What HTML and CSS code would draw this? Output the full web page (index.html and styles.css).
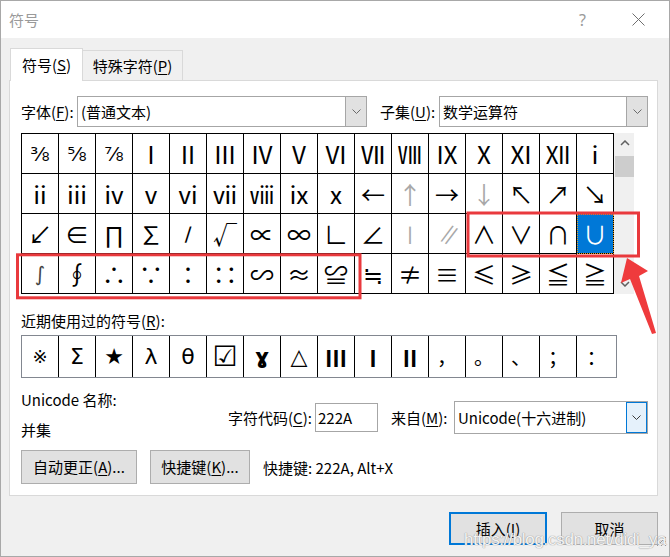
FILE: index.html
```html
<!DOCTYPE html>
<html lang="zh-CN">
<head>
<meta charset="utf-8">
<title>符号</title>
<link rel="stylesheet" href="styles.css">
</head>
<body>
<div class="window">
  <div class="titlebar">
    <span class="title">符号</span>
    <span class="help">?</span>
    <svg class="close" width="13" height="13" viewBox="0 0 13 13"><path d="M0.5 0.5 L12.5 12.5 M12.5 0.5 L0.5 12.5" stroke="#6f6f6f" stroke-width="1" fill="none"/></svg>
  </div>
  <div class="body">
    <div class="tabs">
      <div class="tab active">符号(<u>S</u>)</div>
      <div class="tab">特殊字符(<u>P</u>)</div>
    </div>
    <div class="panel">
      <div class="font-row">
        <span class="lbl lbl-font">字体(<u>F</u>):</span>
        <div class="select sel-font"><span class="sel-text">(普通文本)</span><span class="sel-btn"><svg width="9" height="5" viewBox="0 0 9 5"><path d="M0.5 0.5 L4.5 4.5 L8.5 0.5" stroke="#6a6a6a" fill="none"/></svg></span></div>
        <span class="lbl lbl-subset">子集(<u>U</u>):</span>
        <div class="select sel-subset"><span class="sel-text">数学运算符</span><span class="sel-btn"><svg width="9" height="5" viewBox="0 0 9 5"><path d="M0.5 0.5 L4.5 4.5 L8.5 0.5" stroke="#6a6a6a" fill="none"/></svg></span></div>
      </div>
      <div class="grid-wrap">
        <div class="grid">
          <div class="cell frac">⅜</div><div class="cell frac">⅝</div><div class="cell frac">⅞</div><div class="cell">Ⅰ</div><div class="cell">Ⅱ</div><div class="cell">Ⅲ</div><div class="cell">Ⅳ</div><div class="cell">Ⅴ</div><div class="cell">Ⅵ</div><div class="cell">Ⅶ</div><div class="cell">Ⅷ</div><div class="cell">Ⅸ</div><div class="cell">Ⅹ</div><div class="cell">Ⅺ</div><div class="cell">Ⅻ</div><div class="cell">ⅰ</div>
          <div class="cell">ⅱ</div><div class="cell">ⅲ</div><div class="cell">ⅳ</div><div class="cell">ⅴ</div><div class="cell">ⅵ</div><div class="cell">ⅶ</div><div class="cell">ⅷ</div><div class="cell">ⅸ</div><div class="cell">ⅹ</div><div class="cell">←</div><div class="cell light">↑</div><div class="cell">→</div><div class="cell light">↓</div><div class="cell">↖</div><div class="cell">↗</div><div class="cell">↘</div>
          <div class="cell">↙</div><div class="cell">∈</div><div class="cell">∏</div><div class="cell">∑</div><div class="cell small">∕</div><div class="cell">√</div><div class="cell">∝</div><div class="cell">∞</div><div class="cell">∟</div><div class="cell">∠</div><div class="cell light">∣</div><div class="cell light skew">∥</div><div class="cell">∧</div><div class="cell">∨</div><div class="cell">∩</div><div class="cell selected">∪</div>
          <div class="cell thin">∫</div><div class="cell">∮</div><div class="cell">∴</div><div class="cell">∵</div><div class="cell">∶</div><div class="cell">∷</div><div class="cell">∽</div><div class="cell">≈</div><div class="cell">≌</div><div class="cell">≒</div><div class="cell">≠</div><div class="cell">≡</div><div class="cell">≤</div><div class="cell">≥</div><div class="cell">≦</div><div class="cell">≧</div>
        </div>
        <div class="scrollbar">
          <div class="sb-btn"><svg width="10" height="6" viewBox="0 0 10 6"><path d="M1 5 L5 1 L9 5" stroke="#606060" stroke-width="1.5" fill="none"/></svg></div>
          <div class="sb-thumb"></div>
          <div class="sb-track"></div>
          <div class="sb-btn"><svg width="10" height="6" viewBox="0 0 10 6"><path d="M1 1 L5 5 L9 1" stroke="#606060" stroke-width="1.5" fill="none"/></svg></div>
        </div>
      </div>
      <div class="recent-label">近期使用过的符号(<u>R</u>):</div>
      <div class="recent">
        <div class="rcell thinref">※</div><div class="rcell">Σ</div><div class="rcell">★</div><div class="rcell">λ</div><div class="rcell">θ</div><div class="rcell check">☑</div><div class="rcell bold">ɣ</div><div class="rcell">△</div><div class="rcell roman">Ⅲ</div><div class="rcell roman">Ⅰ</div><div class="rcell roman">Ⅱ</div><div class="rcell cjk">，</div><div class="rcell cjk">。</div><div class="rcell cjk">、</div><div class="rcell cjk">；</div><div class="rcell cjk">：</div>
      </div>
      <div class="info">
        <div class="info-left">
          <div class="info-line">Unicode 名称:</div>
          <div class="info-line second">并集</div>
        </div>
        <div class="info-right">
          <span class="lbl lbl-code">字符代码(<u>C</u>):</span>
          <div class="input">222A</div>
          <span class="lbl lbl-from">来自(<u>M</u>):</span>
          <div class="select sel-from"><span class="sel-text">Unicode(十六进制)</span><span class="sel-btn hot"><svg width="9" height="5" viewBox="0 0 9 5"><path d="M0.5 0.5 L4.5 4.5 L8.5 0.5" stroke="#3a3a3a" fill="none"/></svg></span></div>
        </div>
      </div>
      <div class="btn-row">
        <div class="btn btn-auto">自动更正(<u>A</u>)...</div>
        <div class="btn btn-key">快捷键(<u>K</u>)...</div>
        <span class="shortcut">快捷键: 222A, Alt+X</span>
      </div>
    </div>
    <div class="footer">
      <div class="btn btn-foot default">插入(<u>I</u>)</div>
      <div class="btn btn-foot">取消</div>
    </div>
  </div>
  <svg class="annot" width="670" height="557" viewBox="0 0 670 557">
    <rect x="468" y="213" width="170.5" height="43" fill="none" stroke="#e9393d" stroke-width="3"/>
    <rect x="17.5" y="254.8" width="342.5" height="43" fill="none" stroke="#e9393d" stroke-width="3"/>
    <polygon points="627,258 648,271 639,276 656,333 652,334 630,279 621,283" fill="#ef3b3d"/>
    <path d="M657 546 L666 537 M661 546 L666 541 M665 546 L666 545" stroke="#9a9a9a" stroke-width="1"/>
  </svg>
  <div class="watermark">https://blog.csdn.net/didi_ya</div>
</div>
</body>
</html>
```

FILE: styles.css
```css
* { box-sizing: border-box; }
html, body { margin: 0; padding: 0; }
body {
  width: 670px;
  height: 557px;
  overflow: hidden;
  background: #fff;
  font-family: "Noto Sans CJK SC", "Noto Sans", sans-serif;
  font-size: 15px;
  color: #000;
}
u { text-decoration: underline; text-underline-offset: 2px; text-decoration-thickness: 1px; }

.window {
  position: relative;
  width: 670px;
  height: 557px;
  border: 1px solid #a8a8a8;
  background: #f0f0f0;
  display: flex;
  flex-direction: column;
}

.titlebar {
  height: 37px;
  flex: none;
  background: #fff;
  display: flex;
  align-items: center;
  padding: 0 24px 0 8px;
}
.title { flex: 1; color: #9a9a9a; font-size: 15px; line-height: 20px; }
.help { color: #9a9a9a; font-size: 16px; font-family: "Noto Sans", sans-serif; margin-right: 46px; line-height: 20px; }
.close { display: block; }

.body {
  flex: 1;
  display: flex;
  flex-direction: column;
  padding: 10px 11px 0 8px;
}

.tabs {
  height: 32px;
  display: flex;
  align-items: flex-end;
  padding-left: 1px;
}
.tab {
  height: 30px;
  border: 1px solid #d9d9d9;
  border-bottom: none;
  background: #f0f0f0;
  display: flex;
  align-items: center;
  justify-content: center;
  width: 100px;
  border-left: none;
  line-height: 20px;
}
.tab.active {
  width: 73px;
  height: 33px;
  margin-bottom: -1px;
  background: #fff;
  border-left: 1px solid #d9d9d9;
  position: relative;
  z-index: 1;
  padding-bottom: 1px;
}

.panel {
  height: 416px;
  background: #fff;
  border: 1px solid #d9d9d9;
  padding: 15px 9px 0 11px;
  display: flex;
  flex-direction: column;
}

.lbl { white-space: nowrap; line-height: 20px; }
.font-row { height: 31px; display: flex; align-items: center; }
.lbl-font { width: 56px; }
.lbl-subset { width: 59px; margin-left: 13px; }

.select {
  display: flex;
  height: 31px;
  border: 1px solid #a6a6a6;
  background: #fff;
}
.sel-font { width: 290px; }
.sel-subset { width: 209px; }
.sel-text { flex: 1; padding-left: 3px; line-height: 29px; white-space: nowrap; }
.sel-btn {
  width: 21px;
  display: flex;
  align-items: center;
  justify-content: center;
  background: #e1e1e1;
  border-left: 1px solid #a6a6a6;
}
.sel-btn.hot { background: #e5f1fb; border: 1px solid #0078d7; }

.grid-wrap { margin-top: 6px; display: flex; height: 161px; }
.grid {
  width: 593px;
  height: 161px;
  display: grid;
  grid-template-columns: repeat(16, 37px);
  grid-auto-rows: 40px;
  border-top: 1px solid #000;
  border-left: 1px solid #000;
  font-family: "Noto Sans CJK SC", "DejaVu Sans", sans-serif;
  font-size: 24px;
}
.cell {
  border-right: 1px solid #000;
  border-bottom: 1px solid #000;
  display: flex;
  align-items: center;
  justify-content: center;
  line-height: 1;
  white-space: nowrap;
  overflow: hidden;
  color: #000;
}
.cell.frac { font-family: "DejaVu Sans", sans-serif; font-size: 20px; }
.cell.small { font-family: "DejaVu Sans", sans-serif; font-size: 20px; color: #000; }
.cell.thin { font-family: "DejaVu Sans", sans-serif; font-size: 20px; color: #444; }
.cell.light { color: #a8a8a8; }
.cell.skew { font-style: italic; }
.cell.selected {
  background: #0078d7;
  color: #fff;
  outline: 1px dotted #e0a020;
  outline-offset: -1px;
}

.scrollbar {
  width: 20px;
  height: 161px;
  background: #f0f0f0;
  display: flex;
  flex-direction: column;
  padding-left: 1px;
}
.sb-btn { height: 20px; display: flex; align-items: center; justify-content: center; }
.sb-thumb { height: 21px; margin-top: 3px; background: #cdcdcd; }
.sb-track { flex: 1; }

.recent-label { margin-top: 17px; line-height: 20px; height: 20px; white-space: nowrap; }
.recent {
  margin-top: 4px;
  width: 596px;
  height: 43px;
  border: 1px solid #828790;
  display: grid;
  grid-template-columns: repeat(15, 37px) 1fr;
  font-family: "DejaVu Sans", "Noto Sans CJK SC", sans-serif;
  font-size: 22px;
}
.rcell {
  border-right: 1px solid #000;
  display: flex;
  align-items: center;
  justify-content: center;
  line-height: 1;
}
.rcell:last-child { border-right: none; }
.rcell.thinref { font-size: 18px; }
.rcell.bold { font-weight: bold; }
.rcell.roman { font-family: "Noto Sans CJK SC", sans-serif; font-weight: bold; font-size: 22px; }
.rcell.check { font-weight: bold; font-size: 28px; }
.rcell.cjk { font-family: "Noto Sans CJK SC", sans-serif; font-size: 20px; }

.info { margin-top: 12px; display: flex; height: 50px; }
.info-left { width: 207px; }
.info-line { line-height: 20px; white-space: nowrap; }
.info-line.second { margin-top: 10px; }
.info-right { display: flex; align-items: center; margin-top: 11px; height: 33px; }
.lbl-code { width: 87px; }
.input {
  width: 63px;
  height: 29px;
  border: 1px solid #a6a6a6;
  padding-left: 2px;
  line-height: 27px;
}
.lbl-from { width: 63px; margin-left: 13px; }
.sel-from { width: 194px; height: 33px; }
.sel-from .sel-text { line-height: 31px; }

.btn-row { margin-top: 10px; display: flex; align-items: center; height: 34px; }
.btn {
  height: 34px;
  background: #e1e1e1;
  border: 1px solid #adadad;
  display: flex;
  align-items: center;
  justify-content: center;
  white-space: nowrap;
  line-height: 20px;
}
.btn-auto { width: 116px; }
.btn-key { width: 100px; margin-left: 13px; }
.shortcut { margin-left: 13px; white-space: nowrap; }

.footer {
  margin-top: 16px;
  display: flex;
  justify-content: flex-end;
  gap: 14px;
}
.btn-foot { width: 97px; height: 33px; }
.btn-foot.default { width: 98px; border: 2px solid #0078d7; }

.annot { position: absolute; left: -1px; top: -1px; pointer-events: none; z-index: 5; }
.watermark {
  position: absolute;
  left: 463px;
  top: 529px;
  z-index: 6;
  font-family: "Liberation Sans", sans-serif;
  font-size: 17px;
  letter-spacing: -0.3px;
  color: rgba(255, 255, 255, 0.9);
  text-shadow: 0 0 1px #9a9a9a, 0 0 1px #9a9a9a;
  white-space: nowrap;
}
```
